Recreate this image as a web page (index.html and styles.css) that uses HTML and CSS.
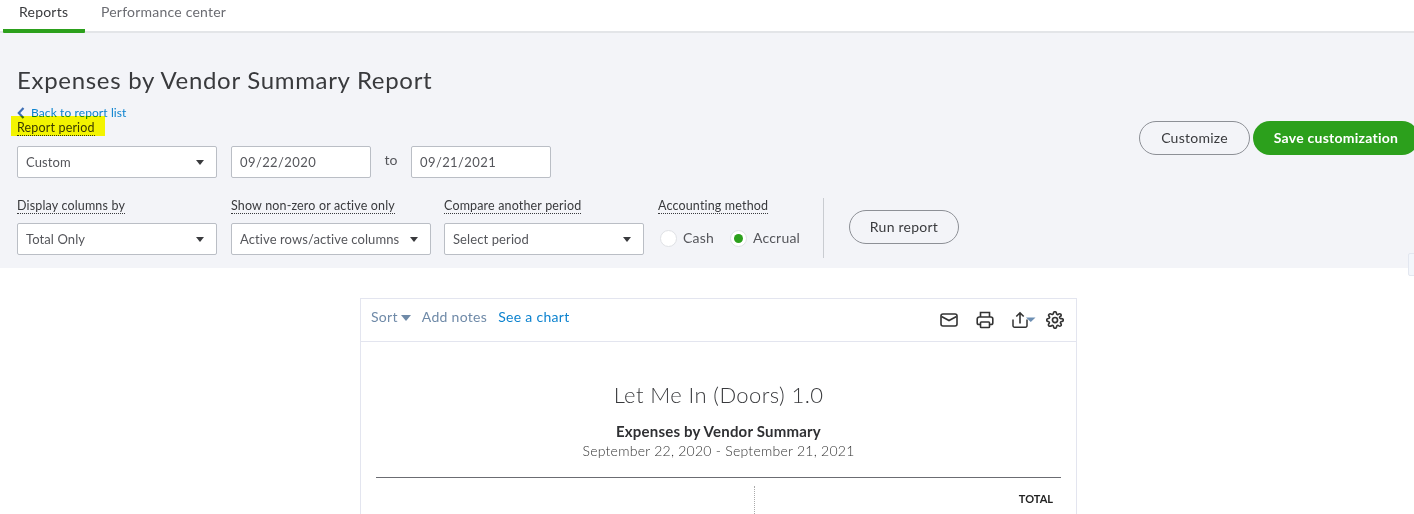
FILE: index.html
```html
<!DOCTYPE html>
<html lang="en">
<head>
<meta charset="utf-8">
<title>Expenses by Vendor Summary Report</title>
<link rel="stylesheet" href="styles.css">
</head>
<body>
<nav class="tabs">
  <a class="tab tab-active">Reports</a>
  <a class="tab">Performance center</a>
</nav>
<main class="panel">
  <div class="panel-left">
    <h1 class="title">Expenses by Vendor Summary Report</h1>
    <a class="back"><svg class="back-icon" width="8" height="12" viewBox="0 0 8 12"><path d="M6.500 1 1.800 6l4.700 5" fill="none" stroke="#3f6fb5" stroke-width="2.200"/></svg>Back to report list</a>
    <div class="period-label"><span class="label">Report period</span><span class="highlight"></span></div>
    <div class="row row-period">
      <div class="select w200"><span>Custom</span><i class="caret"></i></div>
      <div class="input">09/22/2020</div>
      <span class="to">to</span>
      <div class="input">09/21/2021</div>
    </div>
    <div class="row row-options">
      <div class="field"><span class="label">Display columns by</span>
        <div class="select w200"><span>Total Only</span><i class="caret"></i></div></div>
      <div class="field field-tight"><span class="label">Show non-zero or active only</span>
        <div class="select w200"><span>Active rows/active columns</span><i class="caret"></i></div></div>
      <div class="field"><span class="label">Compare another period</span>
        <div class="select w200"><span>Select period</span><i class="caret"></i></div></div>
      <div class="field field-method"><span class="label">Accounting method</span>
        <div class="radios">
          <span class="radio"></span><span class="radio-text">Cash</span>
          <span class="radio radio-on"></span><span class="radio-text">Accrual</span>
        </div></div>
      <div class="divider"></div>
      <button class="btn btn-run">Run report</button>
    </div>
  </div>
  <div class="actions">
    <button class="btn btn-customize">Customize</button>
    <button class="btn btn-save">Save customization</button>
  </div>
  <span class="edge-tab"></span>
</main>
<section class="report">
  <div class="toolbar">
    <span class="tool muted">Sort<i class="caret-blue"></i></span>
    <span class="tool muted">Add notes</span>
    <span class="tool link">See a chart</span>
    <div class="icons">
      <svg width="18" height="16" viewBox="0 0 18 16" fill="none" stroke="#333" stroke-width="1.600"><rect x="1" y="2" width="16" height="12" rx="2"/><path d="M1.500 4.500 9 8.500l7.500-4"/></svg>
      <svg class="ic-print" width="18" height="18" viewBox="0 0 18 18" fill="none" stroke="#333" stroke-width="1.600"><path d="M4.500 6V1.500h9V6"/><path d="M4.500 13.500H3A1.800 1.800 0 0 1 1.200 11.700V8A2 2 0 0 1 3.200 6h11.600a2 2 0 0 1 2 2v3.700a1.800 1.800 0 0 1-1.800 1.800h-1.500"/><rect x="4.500" y="11" width="9" height="5.500" rx=".8"/></svg>
      <svg class="ic-share" width="24" height="18" viewBox="0 0 24 18"><path d="M1 8.500v6.200A1.500 1.500 0 0 0 2.500 16.200h11A1.500 1.500 0 0 0 15 14.700V8.500" fill="none" stroke="#333" stroke-width="1.500"/><path d="M8 12.500V2M4.300 5.500 8 1.800l3.700 3.700" fill="none" stroke="#333" stroke-width="1.600"/><path d="M14 6.500h9.500L18.750 11z" fill="#6d8fb3"/></svg>
      <svg class="ic-gear" width="18" height="18" viewBox="0 0 24 24" fill="none" stroke="#333" stroke-width="2.200" stroke-linejoin="round"><circle cx="12" cy="12" r="3.400"/><path d="M19.400 15a1.650 1.650 0 0 0 .33 1.820l.06.06a2 2 0 1 1-2.830 2.830l-.06-.06a1.650 1.650 0 0 0-2.820 1.170V21a2 2 0 1 1-4 0v-.09a1.650 1.650 0 0 0-2.820-1.170l-.6.060a2 2 0 1 1-2.830-2.830l.06-.06A1.650 1.650 0 0 0 3.090 14H3a2 2 0 1 1 0-4h.09a1.650 1.650 0 0 0 1.170-2.820l-.06-.06a2 2 0 1 1 2.830-2.830l.6.060A1.650 1.650 0 0 0 9.910 3.090V3a2 2 0 1 1 4 0v.09a1.650 1.650 0 0 0 2.820 1.170l.06-.06a2 2 0 1 1 2.830 2.830l-.6.060A1.650 1.650 0 0 0 20.910 10H21a2 2 0 1 1 0 4h-.09a1.650 1.650 0 0 0-1.510 1z"/></svg>
    </div>
  </div>
  <div class="sheet">
    <h2 class="company">Let Me In (Doors) 1.0</h2>
    <div class="report-name">Expenses by Vendor Summary</div>
    <div class="report-dates">September 22, 2020 - September 21, 2021</div>
    <div class="table-head">
      <div class="col-name"></div>
      <div class="col-total">TOTAL</div>
    </div>
  </div>
</section>
</body>
</html>
```
FILE: styles.css
```css
* { box-sizing: border-box; }
html, body { margin: 0; height: 514px; overflow: hidden; background: #fff; }
body { font-family: "Lato", "Liberation Sans", sans-serif; color: #393a3d; }

.tabs { display: flex; height: 33px; padding-left: 3px; border-bottom: 2px solid #e3e5e8; }
.tab { height: 33px; padding: 3px 16px 0; font-size: 14px; line-height: 17px; color: #6b6c72; letter-spacing: .22px; }
.tab-active { width: 82px; color: #393a3d; border-bottom: 4px solid #2ca01c; border-radius: 0 0 1px 1px; }

.panel { position: relative; display: flex; height: 235px; background: #f3f4f8; padding-left: 17px; }
.panel-left { width: 1122px; flex: none; }
.title { margin: 0; padding-top: 32px; font-size: 24px; line-height: 29px; font-weight: 400; letter-spacing: .69px; color: #393a3d; }
.back { display: flex; align-items: center; height: 14px; margin-top: 12px; font-size: 12px; line-height: 14px; letter-spacing: .1px; color: #0d83cf; }
.back-icon { margin-right: 6px; }
.period-label { position: relative; display: flex; align-items: flex-start; height: 16px; margin-top: 1px; }
.highlight { position: absolute; left: -6px; top: -5px; width: 94px; height: 20px; background: #ffff00; mix-blend-mode: multiply; }
.label { display: inline-block; font-size: 12.500px; line-height: 14px; letter-spacing: .16px; color: #393a3d; border-bottom: 1px dotted #393a3d; }

.row { display: flex; }
.row-period { align-items: center; margin-top: 9px; }
.row-options { margin-top: 21px; align-items: flex-start; }
.select, .input { display: flex; align-items: center; height: 32px; background: #fff; border: 1px solid #babec5; border-radius: 2px; font-size: 13px; color: #55565b; letter-spacing: .1px; white-space: nowrap; }
.select { justify-content: space-between; padding: 0 12px 0 8px; }
.w200 { width: 200px; flex: none; }
.input { width: 140px; padding-left: 8px; letter-spacing: .4px; }
.row-period .input:nth-child(2) { margin-left: 14px; }
.to { width: 40px; text-align: center; font-size: 14px; color: #55565b; position: relative; top: -3px; }
.caret { width: 0; height: 0; border: 4.500px solid transparent; border-top: 5px solid #393a3d; border-bottom: 0; }

.field { display: flex; flex-direction: column; margin-right: 14px; width: 200px; align-items: flex-start; }
.field-tight { margin-right: 13px; }
.field .label { margin-bottom: 9px; }
.field-method { width: 150px; margin-right: 15px; }
.radios { display: flex; align-items: center; margin-top: 6px; margin-left: 2px; font-size: 14px; color: #55565b; letter-spacing: .2px; }
.radio { width: 17px; height: 17px; border-radius: 50%; background: #fff; border: 1px solid #dfe1e5; position: relative; top: 1px; }
.radio-on::after { content: ""; position: absolute; left: 3px; top: 3px; width: 9px; height: 9px; border-radius: 50%; background: #2ca01c; }
.radio-text { margin-left: 6px; margin-right: 16px; }
.radio-text:last-child { margin-right: 0; }
.divider { width: 1px; height: 60px; background: #c9ccd1; margin-top: -1px; }

.btn { font-family: inherit; font-size: 14px; height: 34px; border-radius: 17px; padding: 0 0 2px; letter-spacing: .25px; }
.btn-run { width: 110px; margin: 11px 0 0 25px; background: transparent; border: 1px solid #8d9096; color: #393a3d; }
.actions { display: flex; gap: 3px; padding-top: 88px; flex: none; }
.btn-customize { width: 111px; background: transparent; border: 1px solid #8d9096; color: #393a3d; }
.btn-save { width: 166px; background: #2ca01c; border: 0; color: #fff; font-weight: 700; }
.edge-tab { position: absolute; right: -2px; top: 220px; width: 8px; height: 23px; background: #f3f6fb; border: 1px solid #e3e7f0; border-radius: 2px; }

.report { width: 717px; height: 216px; margin: 30px 0 0 360px; border: 1px solid #e3e5ef; border-bottom: 0; }
.toolbar { display: flex; align-items: center; gap: 11px; height: 43px; padding: 0 12px 7px 10px; border-bottom: 1px solid #e3e5ef; font-size: 14px; letter-spacing: .3px; }
.muted { color: #6f8aa8; }
.link { color: #0d83cf; }
.caret-blue { display: inline-block; width: 0; height: 0; margin-left: 3px; vertical-align: 1px; border: 5px solid transparent; border-top: 6px solid #6f8aa8; border-bottom: 0; }
.icons { display: flex; align-items: center; margin-left: auto; padding: 7px 0 0; }
.ic-print { margin-left: 18px; }
.ic-share { margin-left: 18px; }
.ic-gear { margin-left: 10px; }

.sheet { padding: 0 15px; text-align: center; }
.company { margin: 0; padding-top: 39px; font-size: 22px; line-height: 27px; font-weight: 300; color: #393a3d; letter-spacing: .4px; }
.report-name { margin-top: 15px; font-size: 15px; line-height: 17px; font-weight: 700; color: #2f3033; letter-spacing: .2px; }
.report-dates { margin-top: 2px; font-size: 14px; line-height: 17px; color: #333; letter-spacing: .25px; font-weight: 300; }
.table-head { display: flex; margin-top: 18px; height: 40px; border-top: 1px solid #6b6c72; padding-top: 8px; }
.col-name { width: 379px; height: 32px; border-right: 1px dotted #aaa; }
.col-total { flex: 1; text-align: right; padding: 6px 8px 0 0; font-size: 11px; line-height: 14px; font-weight: 700; color: #222; }
```
